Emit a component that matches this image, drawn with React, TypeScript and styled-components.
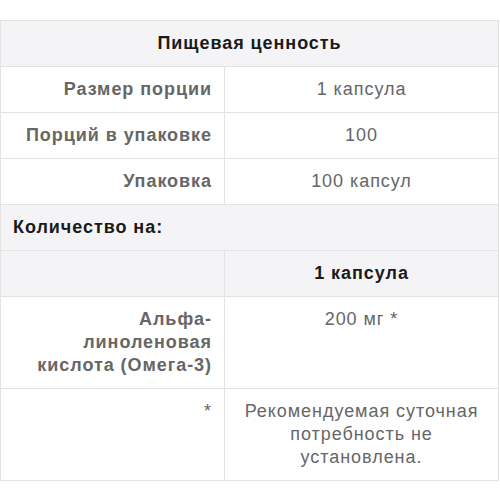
import styled, { createGlobalStyle } from 'styled-components';

const GlobalStyle = createGlobalStyle`
	html, body {
		margin: 0;
		padding: 0;
		background: #ffffff;
	}

	body {
		font-family: 'Liberation Sans', Arial, sans-serif;
	}
`;

const Page = styled.div`
	padding-top: 20px;
	width: 499px;
`;

const Table = styled.table`
	width: 100%;
	border-collapse: collapse;
	table-layout: fixed;
	border: 1px solid #e3e3e3;
	font-size: 18px;
	line-height: 23px;
	letter-spacing: 0.95px;
`;

const Row = styled.tr<{ $shaded?: boolean }>`
	background: ${(p) => (p.$shaded ? '#f4f4f6' : '#ffffff')};
`;

const LabelCell = styled.td<{ $dark?: boolean }>`
	padding: 11px 12px;
	border: 1px solid #e3e3e3;
	text-align: right;
	vertical-align: top;
	font-weight: bold;
	color: ${(p) => (p.$dark ? '#1a1a1a' : '#666666')};
`;

const ValueCell = styled.td<{ $bold?: boolean }>`
	padding: 11px 12px;
	border: 1px solid #e3e3e3;
	text-align: center;
	vertical-align: top;
	font-weight: ${(p) => (p.$bold ? 'bold' : 'normal')};
	color: ${(p) => (p.$bold ? '#1a1a1a' : '#666666')};
`;

const TitleCell = styled.th<{ $align?: 'left' | 'center' }>`
	padding: 11px 12px;
	border: 1px solid #e3e3e3;
	text-align: ${(p) => p.$align || 'center'};
	font-weight: bold;
	color: #1a1a1a;
`;

const Note = styled.span`
	font-weight: normal;
`;

const servingRows = [
	{ label: 'Размер порции', value: '1 капсула' },
	{ label: 'Порций в упаковке', value: '100' },
	{ label: 'Упаковка', value: '100 капсул' }
];

const App = () => {
	return (
		<>
			<GlobalStyle />
			<Page>
				<Table>
					<colgroup>
						<col style={{ width: 224 }} />
						<col />
					</colgroup>
					<tbody>
						<Row $shaded>
							<TitleCell colSpan={2}>Пищевая ценность</TitleCell>
						</Row>
						{servingRows.map((row) => (
							<Row key={row.label}>
								<LabelCell>{row.label}</LabelCell>
								<ValueCell>{row.value}</ValueCell>
							</Row>
						))}
						<Row $shaded>
							<TitleCell colSpan={2} $align="left">
								Количество на:
							</TitleCell>
						</Row>
						<Row $shaded>
							<LabelCell />
							<ValueCell $bold>1 капсула</ValueCell>
						</Row>
						<Row>
							<LabelCell>Альфа-линоленовая кислота (Омега-3)</LabelCell>
							<ValueCell>200 мг *</ValueCell>
						</Row>
						<Row>
							<LabelCell>
								<Note>*</Note>
							</LabelCell>
							<ValueCell>Рекомендуемая суточная потребность не установлена.</ValueCell>
						</Row>
					</tbody>
				</Table>
			</Page>
		</>
	);
};

export default App;
